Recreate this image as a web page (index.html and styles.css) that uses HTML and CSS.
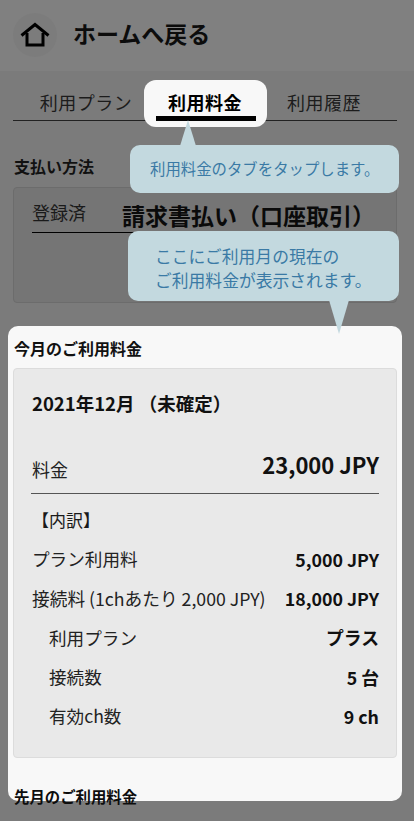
FILE: index.html
```html
<!DOCTYPE html>
<html lang="ja">
<head>
<meta charset="utf-8">
<title>利用料金</title>
<link rel="stylesheet" href="styles.css">
</head>
<body>
<header class="header">
  <span class="home-btn">
    <svg class="home-icon" viewBox="0 0 30 25" width="30" height="25" aria-hidden="true">
      <path d="M1.5 13.5 15 2.5 28.5 13.5" fill="none" stroke="#000" stroke-width="3"/>
      <path d="M7 11v12h16V11" fill="none" stroke="#000" stroke-width="3"/>
    </svg>
  </span>
  <h1 class="title">ホームへ戻る</h1>
</header>
<nav class="tabs">
  <span class="tab">利用プラン</span>
  <span class="tab tab-active">利用料金</span>
  <span class="tab">利用履歴</span>
</nav>
<main class="content">
  <h2 class="section-title method-title">支払い方法</h2>
  <section class="method-box">
    <div class="method-row">
      <span class="method-label">登録済</span>
      <span class="method-value">請求書払い（口座取引）</span>
    </div>
  </section>
</main>
<section class="panel">
  <h2 class="section-title panel-title">今月のご利用料金</h2>
  <div class="card">
    <h3 class="month">2021年12月 （未確定）</h3>
    <div class="total-row">
      <span class="total-label">料金</span>
      <span class="total-value">23,000 JPY</span>
    </div>
    <p class="breakdown">【内訳】</p>
    <div class="row"><span>プラン利用料</span><b>5,000 JPY</b></div>
    <div class="row"><span class="tight">接続料 (1chあたり 2,000 JPY)</span><b>18,000 JPY</b></div>
    <div class="row sub"><span>利用プラン</span><b>プラス</b></div>
    <div class="row sub"><span>接続数</span><b>5 台</b></div>
    <div class="row sub"><span>有効ch数</span><b>9 ch</b></div>
  </div>
  <h2 class="section-title last-title">先月のご利用料金</h2>
</section>
<div class="callout callout-tab">利用料金のタブをタップします。</div>
<div class="callout callout-fee">ここにご利用月の現在の<br>ご利用料金が表示されます。</div>
</body>
</html>
```
FILE: styles.css
```css
* { box-sizing: border-box; }
html, body { margin: 0; padding: 0; }
body {
  position: relative;
  width: 414px;
  height: 821px;
  overflow: hidden;
  background: #7b7b7b;
  color: #111;
  font-family: "Noto Sans CJK JP", "Noto Sans", sans-serif;
}
h1, h2, h3, p { margin: 0; }

.header {
  display: flex;
  align-items: center;
  height: 71px;
  padding: 0 0 2px 13px;
  background: #808080;
}
.home-btn {
  display: flex;
  align-items: center;
  justify-content: center;
  width: 44px;
  height: 44px;
  border-radius: 50%;
  background: #7c7c7c;
}
.title {
  margin: -3px 0 0 16px;
  font-size: 23px;
  font-weight: 700;
  line-height: 30px;
  color: #0c0c0c;
}

.tabs {
  display: flex;
  justify-content: center;
  height: 41px;
  margin: 9px 17px 0 13px;
  border-bottom: 1px solid #222;
}
.tab {
  position: relative;
  width: 119px;
  padding-top: 9px;
  text-align: center;
  font-size: 18px;
  letter-spacing: 0.5px;
  line-height: 26px;
  color: #1c1c1c;
  white-space: nowrap;
}
.tab-active {
  font-weight: 700;
  color: #000;
  z-index: 0;
}
.tab-active::before {
  content: "";
  position: absolute;
  z-index: -1;
  left: -2px;
  right: -2px;
  top: 0;
  height: 47px;
  border-radius: 12px;
  background: #f8f8f8;
}
.tab-active::after {
  content: "";
  position: absolute;
  left: 10px;
  right: 9px;
  top: 36px;
  height: 5px;
  background: #000;
}

.content { padding: 0 17px 0 13px; }
.section-title {
  font-size: 16px;
  font-weight: 700;
  line-height: 22px;
  color: #111;
}
.method-title { margin: 34px 0 0 1px; }
.method-box {
  height: 116px;
  margin-top: 10px;
  padding: 11px 17px 0 18px;
  border: 1px solid #6c6c6c;
  border-radius: 4px;
  background: #757575;
}
.method-row {
  display: flex;
  height: 34px;
  border-bottom: 1px solid #000;
}
.method-label {
  font-size: 18px;
  line-height: 26px;
  color: #1a1a1a;
}
.method-value {
  margin-left: 36px;
  font-size: 23px;
  font-weight: 700;
  line-height: 32px;
  color: #0a0a0a;
  white-space: nowrap;
}

.panel {
  height: 475px;
  margin: 23px 12px 0 8px;
  padding: 0 5px;
  border-radius: 10px;
  background: #f8f8f8;
}
.panel-title { padding: 11px 0 0 1px; }
.card {
  height: 390px;
  margin-top: 9px;
  padding: 0 17px 0 18px;
  border: 1px solid #dcdcdc;
  border-radius: 4px;
  background: #e9e9e9;
}
.month {
  padding-top: 20px;
  font-size: 18.5px;
  font-weight: 700;
  line-height: 28px;
  color: #111;
}
.total-row {
  display: flex;
  justify-content: space-between;
  height: 77px;
  padding-top: 32px;
  border-bottom: 1.5px solid #555;
  margin-left: -1px;
}
.total-label {
  padding: 6px 0 0 1px;
  font-size: 18px;
  line-height: 28px;
  color: #222;
}
.total-value {
  font-size: 22px;
  font-weight: 700;
  line-height: 30px;
  color: #111;
}
.breakdown {
  margin-top: 13px;
  font-size: 17px;
  line-height: 26px;
  color: #1a1a1a;
}
.row {
  display: flex;
  justify-content: space-between;
  align-items: center;
  height: 39.3px;
  font-size: 17.6px;
  color: #222;
}
.breakdown + .row { margin-top: 6px; }
.row b {
  font-size: 17.8px;
  font-weight: 700;
  color: #111;
}
.tight {
  font-size: 17.7px;
  white-space: nowrap;
}
.sub { padding-left: 17px; }
.last-title {
  margin: 27px 0 0 1px;
  font-size: 15.4px;
  color: #0d0d0d;
}

.callout {
  position: absolute;
  z-index: 2;
  border-radius: 10px;
  background: #c3d9df;
  color: #3a7aa5;
  font-weight: 400;
}
.callout::after {
  content: "";
  position: absolute;
  background: #c3d9df;
}
.callout-tab {
  left: 130px;
  top: 145px;
  width: 269px;
  height: 48px;
  padding: 11px 0 0 20px;
  font-size: 15.4px;
  line-height: 24px;
  white-space: nowrap;
}
.callout-tab::after {
  left: 50px;
  top: -25px;
  width: 16px;
  height: 26px;
  clip-path: polygon(50% 0, 100% 100%, 0 100%);
}
.callout-fee {
  left: 128px;
  top: 231px;
  width: 271px;
  height: 70px;
  padding: 13px 0 0 27px;
  font-size: 16.8px;
  line-height: 24px;
  white-space: nowrap;
}
.callout-fee::after {
  left: 201px;
  top: 69px;
  width: 20px;
  height: 34px;
  clip-path: polygon(0 0, 100% 0, 50% 100%);
}
```
